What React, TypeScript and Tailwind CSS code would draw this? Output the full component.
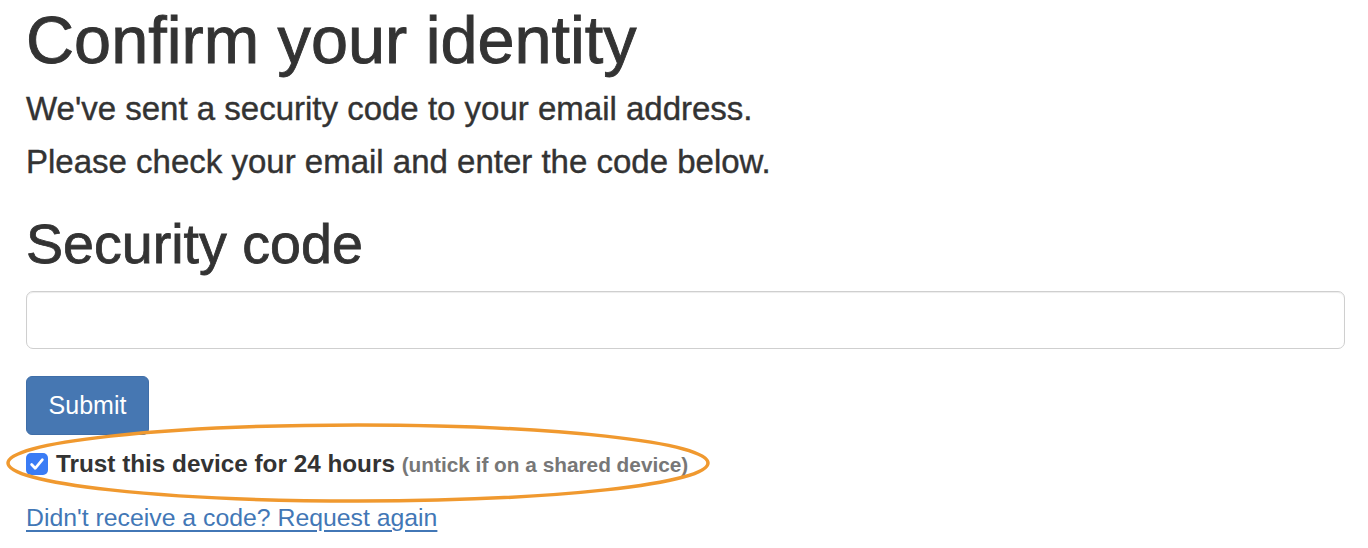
import React, { useState } from "react";

const App = () => {
  const [code, setCode] = useState("");
  const [trust, setTrust] = useState(true);

  return (
    <div className="min-h-[548px] bg-white pl-[26px] pr-[23px] font-['Liberation_Sans',Arial,sans-serif] text-[#333]">
      <h1 className="pt-[7px] text-[66.6px] leading-none [-webkit-text-stroke:0.9px_#333]">
        Confirm your identity
      </h1>
      <p className="mt-[8px] text-[33px] leading-[53px] [-webkit-text-stroke:0.4px_#333]">
        We've sent a security code to your email address.
      </p>
      <p className="text-[33px] leading-[53px] [-webkit-text-stroke:0.4px_#333]">
        Please check your email and enter the code below.
      </p>

      <form onSubmit={(e) => e.preventDefault()}>
        <h2 className="mt-[29px] text-[55.6px] leading-none [-webkit-text-stroke:0.8px_#333]">
          Security code
        </h2>
        <input
          type="text"
          value={code}
          onChange={(e) => setCode(e.target.value)}
          className="mt-[19px] block h-[58px] w-full rounded-[7px] border border-[#cfcfcf] bg-white px-4 text-[25px] shadow-[inset_0_1px_1px_rgba(0,0,0,0.075)] focus:outline-none"
        />
        <button
          type="submit"
          className="mt-[27px] block h-[59px] w-[123px] rounded-[6px] border border-[#3f6ea8] bg-[#4677b2] text-[25px] text-white"
        >
          Submit
        </button>

        <div className="relative mt-[13px] flex h-[32px] items-center">
          <svg
            className="pointer-events-none absolute left-[-21px] top-[-26px]"
            width="706"
            height="84"
            viewBox="0 0 706 84"
          >
            <ellipse
              cx="353"
              cy="41"
              rx="350"
              ry="38"
              fill="none"
              stroke="#f0992f"
              strokeWidth="3.5"
            />
          </svg>
          <button
            type="button"
            onClick={() => setTrust(!trust)}
            className={
              trust
                ? "flex h-[22px] w-[22px] shrink-0 items-center justify-center rounded-[5px] bg-[#3a7cf5]"
                : "flex h-[22px] w-[22px] shrink-0 items-center justify-center rounded-[5px] border border-[#888] bg-white"
            }
          >
            {trust && (
              <svg width="18" height="18" viewBox="0 0 16 16">
                <path
                  d="M3.2 8.4 L6.4 11.8 L12.8 4.2"
                  fill="none"
                  stroke="white"
                  strokeWidth="2.4"
                  strokeLinecap="round"
                  strokeLinejoin="round"
                />
              </svg>
            )}
          </button>
          <span className="ml-[8px] whitespace-nowrap text-[24.3px] font-bold leading-[32px]">
            Trust this device for 24 hours{" "}
            <span className="text-[20.8px] text-[#777]">
              (untick if on a shared device)
            </span>
          </span>
        </div>

        <a
          href="#"
          className="mt-[22px] inline-block text-[24.8px] leading-[32px] text-[#4277b6] underline underline-offset-[4px]"
        >
          Didn't receive a code? Request again
        </a>
      </form>
    </div>
  );
};

export default App;
